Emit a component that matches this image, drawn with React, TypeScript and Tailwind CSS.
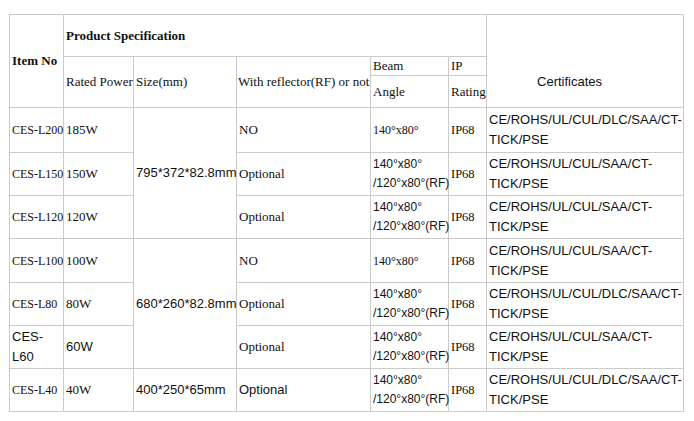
const serif = "font-['Liberation_Serif','Times_New_Roman',serif]";
const sans = "font-['Liberation_Sans',Arial,sans-serif]";
const cell = "border border-[#cbcbcb] px-[2px] py-0 align-middle text-left whitespace-nowrap";

const CERT_DLC = ["CE/ROHS/UL/CUL/DLC/SAA/CT-", "TICK/PSE"];
const CERT = ["CE/ROHS/UL/CUL/SAA/CT-", "TICK/PSE"];

type Row = {
  item: React.ReactNode;
  itemSans?: boolean;
  power: string;
  powerSans?: boolean;
  size?: { text: string; span: number };
  reflector: string;
  reflectorSans?: boolean;
  rf: boolean;
  cert: string[];
  h: string;
};

const rows: Row[] = [
  { item: "CES-L200", power: "185W", size: { text: "795*372*82.8mm", span: 3 }, reflector: "NO", rf: false, cert: CERT_DLC, h: "h-[45px]" },
  { item: "CES-L150", power: "150W", reflector: "Optional", rf: true, cert: CERT, h: "h-[43px]" },
  { item: "CES-L120", power: "120W", reflector: "Optional", rf: true, cert: CERT, h: "h-[43px]" },
  { item: "CES-L100", power: "100W", size: { text: "680*260*82.8mm", span: 3 }, reflector: "NO", rf: false, cert: CERT, h: "h-[44px]" },
  { item: "CES-L80", power: "80W", reflector: "Optional", rf: true, cert: CERT_DLC, h: "h-[43px]" },
  {
    item: (
      <>
        CES-
        <br />
        L60
      </>
    ),
    itemSans: true,
    power: "60W",
    powerSans: true,
    reflector: "Optional",
    rf: true,
    cert: CERT,
    h: "h-[43px]",
  },
  { item: "CES-L40", power: "40W", size: { text: "400*250*65mm", span: 1 }, reflector: "Optional", reflectorSans: true, rf: true, cert: CERT_DLC, h: "h-[43px]" },
];

function Beam({ rf }: { rf: boolean }) {
  if (!rf) {
    return <span className={`${serif} text-[12px]`}>140°x80°</span>;
  }
  return (
    <div className={`${sans} text-[12px] leading-[19px]`}>
      140°x80°
      <br />
      /120°x80°(RF)
    </div>
  );
}

export default function App() {
  return (
    <div className="min-h-[421px] w-[694px] bg-white pl-[9px] pt-[14px] text-[#111]">
      <table className={`${serif} w-[674px] table-fixed border-collapse text-[13px] leading-[16px]`}>
        <colgroup>
          <col className="w-[54px]" />
          <col className="w-[70px]" />
          <col className="w-[103px]" />
          <col className="w-[134px]" />
          <col className="w-[78px]" />
          <col className="w-[38px]" />
          <col className="w-[197px]" />
        </colgroup>
        <thead>
          <tr className="h-[42px]">
            <th rowSpan={3} className={`${cell} font-bold`}>
              Item No
            </th>
            <th colSpan={5} className={`${cell} font-bold`}>
              Product Specification
            </th>
            <th rowSpan={3} className={`${cell} ${sans} pl-[50px] pt-[42px] font-normal`}>
              Certificates
            </th>
          </tr>
          <tr className="h-[19px]">
            <th rowSpan={2} className={`${cell} font-normal`}>
              Rated Power
            </th>
            <th rowSpan={2} className={`${cell} font-normal`}>
              Size(mm)
            </th>
            <th rowSpan={2} className={`${cell} px-px font-normal`}>
              With reflector(RF) or not
            </th>
            <th className={`${cell} font-normal`}>Beam</th>
            <th className={`${cell} font-normal`}>IP</th>
          </tr>
          <tr className="h-[32px]">
            <th className={`${cell} font-normal`}>Angle</th>
            <th className={`${cell} font-normal`}>Rating</th>
          </tr>
        </thead>
        <tbody>
          {rows.map((r, i) => (
            <tr key={i} className={r.h}>
              <td className={`${cell} ${r.itemSans ? `${sans} leading-[20px]` : "text-[12px]"}`}>{r.item}</td>
              <td className={`${cell} ${r.powerSans ? sans : ""}`}>{r.power}</td>
              {r.size && (
                <td rowSpan={r.size.span} className={`${cell} ${sans}`}>
                  {r.size.text}
                </td>
              )}
              <td className={`${cell} ${r.reflectorSans ? sans : ""}`}>{r.reflector}</td>
              <td className={cell}>
                <Beam rf={r.rf} />
              </td>
              <td className={`${cell} text-[12.5px]`}>IP68</td>
              <td className={`${cell} ${sans} leading-[20px]`}>
                {r.cert[0]}
                <br />
                {r.cert[1]}
              </td>
            </tr>
          ))}
        </tbody>
      </table>
    </div>
  );
}
